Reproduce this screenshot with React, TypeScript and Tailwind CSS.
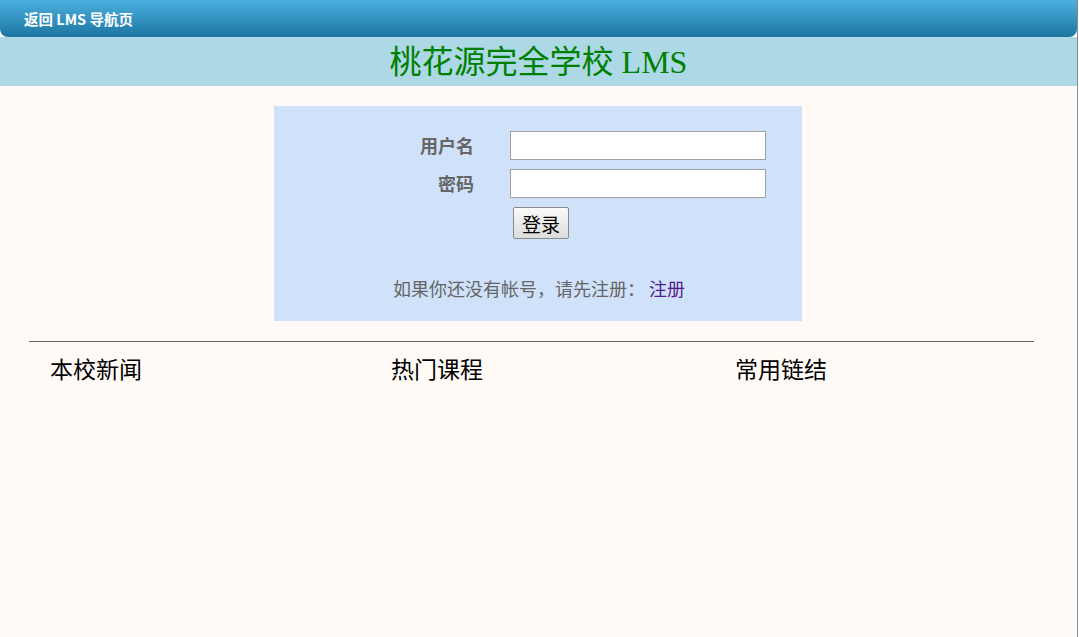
import React from 'react';

const cjk = { fontFamily: '"Noto Sans CJK SC", "Noto Sans", sans-serif' };

const LoginBox = () => {
  return <div className="ml-[274px] mt-5 w-[528px] h-[215px] bg-[#cfe2fa] pt-[25px]">
      <div className="grid grid-cols-[200px_256px] gap-x-9 items-center">
        <label className="text-right text-[18px] font-bold text-[#666] leading-[29px]">用户名</label>
        <input type="text" className="h-[29px] bg-white border border-[#a0a0a0] outline-none px-1" />
        <label className="mt-[9px] text-right text-[18px] font-bold text-[#666] leading-[29px]">密码</label>
        <input type="password" className="mt-[9px] h-[29px] bg-white border border-[#a0a0a0] outline-none px-1" />
        <div></div>
        <div className="pl-[3px] mt-[9px]">
          <button className="h-[32px] w-[56px] text-[19px] leading-none text-black border border-[#8a8a8a] rounded-[2px] bg-gradient-to-b from-[#fafafa] to-[#dcdcdc]">登录</button>
        </div>
      </div>
      <p className="mt-[36px] text-center text-[18px] text-[#666] pl-[2px]">
        如果你还没有帐号，请先注册： <a href="#" className="text-[#551a8b]">注册</a>
      </p>
    </div>;
};

const App = () => {
  const columns = [
    { title: "本校新闻", width: "w-[341px]" },
    { title: "热门课程", width: "w-[344px]" },
    { title: "常用链结", width: "w-[300px]" },
  ];
  return <div className="w-[1078px] min-h-[637px] bg-[#fffaf6] border-r border-[#8c8c8c]" style={cjk}>
      <div className="h-[37px] rounded-b-lg bg-gradient-to-b from-[#4bb0e0] to-[#1b76a0] flex items-center pl-6">
        <a href="#" className="text-white text-[14.5px] font-bold">返回 LMS 导航页</a>
      </div>
      <div className="h-[49px] bg-[#add8e6] flex items-center justify-center">
        <h1 className="text-[32px] text-[#008000] leading-none pt-[1px]" style={{ fontFamily: '"Liberation Serif", "Noto Sans CJK SC", serif' }}>桃花源完全学校 LMS</h1>
      </div>
      <LoginBox />
      <div className="mx-[29px] w-[1005px] mt-5 border-t border-[#666]"></div>
      <div className="flex pl-[50px] pt-[10px]">
        {columns.map(col => <div key={col.title} className={col.width}>
            <h2 className="text-[23px] text-black leading-[32px]">{col.title}</h2>
          </div>)}
      </div>
    </div>;
};

export default App;
